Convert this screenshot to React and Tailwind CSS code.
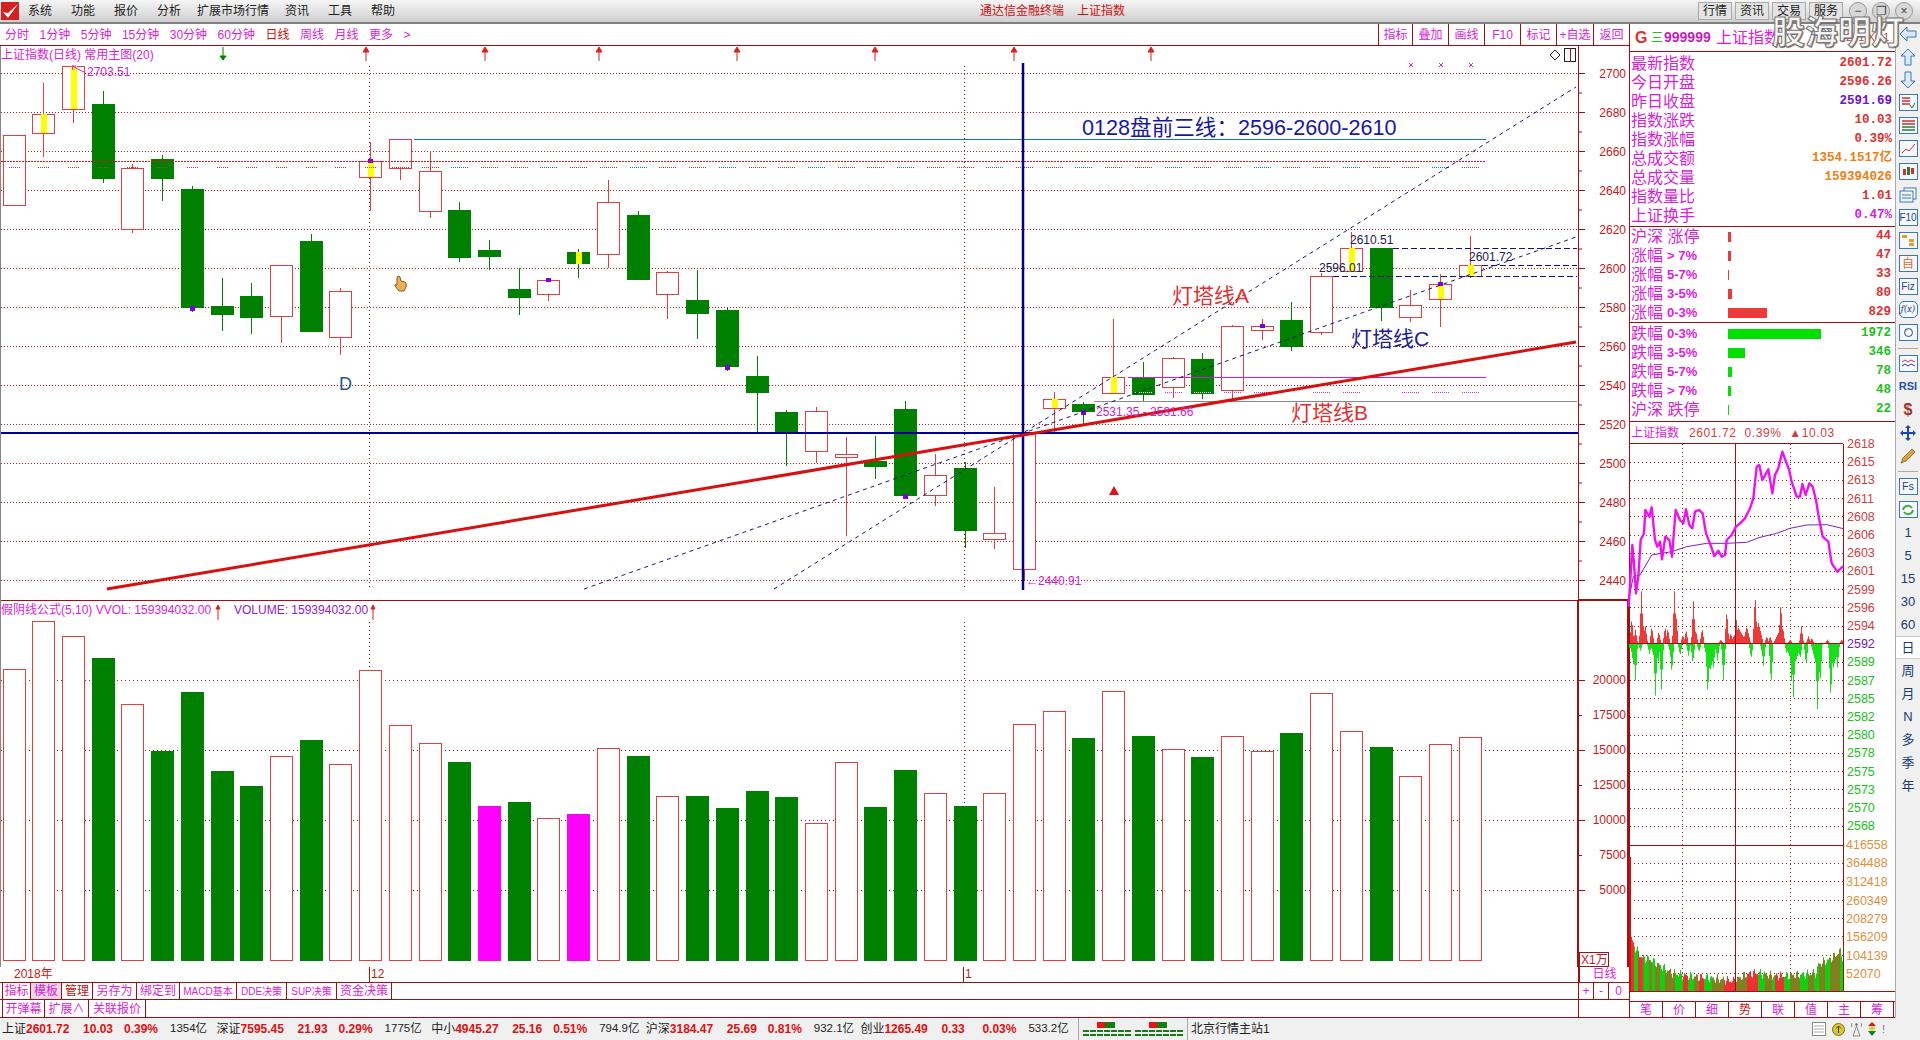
const RED = '#e04040'
const GREEN = '#008000'
const LINE = '#a01010'
const GRID = '#a82020'

// type, high, top, bottom, low, mark (y yellow, t purple top, b purple bottom)
const candles = [
  ['r', 0, 135, 205, 0], ['r', 83, 114, 133, 157, 'y'], ['r', 0, 66, 109, 123, 'y'], ['g', 91, 104, 179, 183],
  ['r', 164, 168, 229, 233], ['g', 155, 159, 179, 201], ['g', 186, 189, 308, 312, 'b'], ['g', 278, 306, 315, 331],
  ['g', 283, 296, 318, 334], ['r', 0, 265, 316, 343], ['g', 234, 241, 332, 0], ['r', 288, 291, 337, 355],
  ['r', 142, 161, 177, 211, 'yt'], ['r', 0, 139, 168, 180], ['r', 151, 171, 211, 218], ['g', 202, 210, 258, 262],
  ['g', 240, 250, 257, 270], ['g', 268, 289, 298, 315], ['r', 0, 280, 294, 301, 't'], ['g', 249, 252, 264, 278, 'y'],
  ['r', 180, 202, 254, 268], ['g', 211, 215, 280, 0], ['r', 271, 272, 294, 319], ['g', 270, 300, 314, 339],
  ['g', 307, 310, 367, 371, 'b'], ['g', 356, 376, 393, 433], ['g', 410, 412, 433, 466], ['r', 407, 411, 451, 463],
  ['r', 437, 454, 457, 536], ['g', 436, 461, 467, 479], ['g', 401, 409, 496, 0, 'b'], ['r', 454, 475, 495, 506],
  ['g', 462, 468, 531, 548], ['r', 487, 533, 539, 549], ['r', 0, 433, 569, 580], ['r', 392, 399, 408, 432, 'y'],
  ['g', 402, 404, 412, 425, 'b'], ['r', 319, 377, 393, 0, 'y'], ['g', 362, 378, 395, 401], ['r', 357, 358, 387, 398],
  ['g', 353, 359, 394, 399], ['r', 325, 326, 390, 399], ['r', 319, 326, 330, 340, 't'], ['g', 302, 320, 347, 351],
  ['r', 273, 276, 332, 335], ['r', 232, 248, 271, 0, 'y'], ['g', 0, 248, 308, 321], ['r', 290, 305, 317, 322],
  ['r', 274, 284, 299, 327, 'yt'], ['r', 236, 265, 276, 278, 'y'],
]

const center = i => Math.round(13.5 + 29.72 * i)

// top of each volume bar, g green, m magenta, r hollow
const volumes = [
  ['r', 669], ['r', 621], ['r', 636], ['g', 658], ['r', 704], ['g', 751], ['g', 692], ['g', 771], ['g', 786], ['r', 756],
  ['g', 740], ['r', 764], ['r', 670], ['r', 725], ['r', 743], ['g', 762], ['m', 806], ['g', 802], ['r', 818], ['m', 814],
  ['r', 748], ['g', 756], ['r', 796], ['g', 796], ['g', 808], ['g', 791], ['g', 797], ['r', 823], ['r', 762], ['g', 807],
  ['g', 770], ['r', 793], ['g', 806], ['r', 793], ['r', 724], ['r', 711], ['g', 738], ['r', 691], ['g', 736], ['r', 749],
  ['g', 757], ['r', 736], ['r', 751], ['g', 733], ['r', 693], ['r', 731], ['g', 747], ['r', 776], ['r', 744], ['r', 737],
]

const priceY = p => Math.round(73.3 + (2700 - p) * 1.95) + 0.5
const priceTicks = Array.from({ length: 14 }, (_, i) => 2700 - i * 20)
const upMarks = [366, 485, 599, 737, 875, 1014, 1151]

function Txt({ x, y, fill, size = 12, anchor, weight, children }) {
  return (
    <text x={x} y={y} fill={fill} fontSize={size} textAnchor={anchor} fontWeight={weight}>
      {children}
    </text>
  )
}

function Candles() {
  return candles.map((c, i) => {
    const [type, hi, top, bot, lo, mark = ''] = c
    const x = center(i)
    const col = type === 'r' ? RED : GREEN
    return (
      <g key={i}>
        {hi > 0 && <line x1={x + 0.5} x2={x + 0.5} y1={hi} y2={top} stroke={col} />}
        {lo > 0 && <line x1={x + 0.5} x2={x + 0.5} y1={bot} y2={lo} stroke={col} />}
        {type === 'r' ? (
          <rect x={x - 10.5} y={top + 0.5} width={22} height={bot - top} fill="#fff" stroke={RED} />
        ) : (
          <rect x={x - 11} y={top} width={23} height={bot - top} fill={GREEN} />
        )}
        {mark.includes('y') && <rect x={x - 2} y={top} width={6} height={bot - top} fill="#ffff00" />}
        {mark.includes('t') && <rect x={x - 2} y={top - 2} width={5} height={4} fill="#8000e0" />}
        {mark.includes('b') && <rect x={x - 2} y={bot - 2} width={5} height={5} fill="#8000e0" />}
      </g>
    )
  })
}

function PricePanel() {
  return (
    <svg className="block w-[1629px] h-[555px]" viewBox="0 46 1629 555">
      {priceTicks.map(p => (
        <line key={p} x1="1" x2="1578" y1={priceY(p)} y2={priceY(p)} stroke={GRID} strokeDasharray="1 2" />
      ))}
      <line x1="369.5" x2="369.5" y1="66" y2="588" stroke={GRID} strokeDasharray="1 3" />
      <line x1="964.5" x2="964.5" y1="66" y2="588" stroke={GRID} strokeDasharray="1 3" />
      <Candles />
      {/* dashed levels */}
      {candles.map((_, i) => (
        <line key={i} x1={center(i) - (i < 13 ? 5 : 8)} x2={center(i) + (i < 13 ? 6 : 9)} y1="167.5" y2="167.5"
          stroke={i > 13 && i % 3 === 0 ? '#208070' : '#d03030'} strokeDasharray="1 1" />
      ))}
      {candles.slice(38).map((_, i) => (
        <line key={i} x1={center(i + 38) - 8} x2={center(i + 38) + 9} y1="392.5" y2="392.5"
          stroke={candles[i + 38][0] === 'g' ? '#fff' : '#d030d0'} strokeDasharray="1 1" />
      ))}
      <line x1="1" x2="1486" y1="161.5" y2="161.5" stroke="#c02020" strokeDasharray="2 1" />
      <line x1="414" x2="1486" y1="139.5" y2="139.5" stroke="#108080" strokeWidth="1.2" />
      <line x1="1094" x2="1577" y1="401.5" y2="401.5" stroke="#888" />
      <line x1="1128" x2="1486" y1="377.5" y2="377.5" stroke="#d020c0" strokeWidth="1.2" />
      <line x1="1393" x2="1577" y1="248.5" y2="248.5" stroke="#101090" strokeDasharray="6 3" />
      <line x1="1482" x2="1577" y1="265.5" y2="265.5" stroke="#101090" strokeDasharray="6 3" />
      <line x1="1333" x2="1577" y1="276.5" y2="276.5" stroke="#101090" strokeDasharray="6 3" />
      {/* trend lines */}
      <line x1="774" y1="589" x2="1576" y2="87" stroke="#000060" strokeWidth="0.9" strokeDasharray="4 4" />
      <line x1="584" y1="589" x2="1576" y2="237" stroke="#000060" strokeWidth="0.9" strokeDasharray="4 4" />
      <line x1="1" x2="1578" y1="433" y2="433" stroke="#000090" strokeWidth="2.2" />
      <line x1="1023" x2="1023" y1="63" y2="590" stroke="#000090" strokeWidth="2.5" />
      <line x1="107" y1="589" x2="1576" y2="342" stroke="#d81010" strokeWidth="3" />
      {/* annotations */}
      <Txt x="1082" y="135" fill="#1818a8" size="21.6">0128盘前三线：2596-2600-2610</Txt>
      <Txt x="1172" y="303" fill="#e03030" size="21">灯塔线A</Txt>
      <Txt x="1291" y="420" fill="#e03030" size="21">灯塔线B</Txt>
      <Txt x="1351" y="346" fill="#202090" size="21">灯塔线C</Txt>
      <Txt x="339" y="390" fill="#1a5a98" size="18">D</Txt>
      <Txt x="87" y="76" fill="#d020d0">2703.51</Txt>
      <path d="M72 66 L84 72 M72 66 l4 0 M72 66 l1 4" stroke="#d020d0" fill="none" />
      <Txt x="1026" y="585" fill="#d020d0">←2440.91</Txt>
      <Txt x="1096" y="416" fill="#d020d0">2531.35 - 2531.66</Txt>
      <Txt x="1350" y="244" fill="#202050">2610.51</Txt>
      <Txt x="1319" y="272" fill="#202050">2596.01</Txt>
      <Txt x="1469" y="261" fill="#202050">2601.72</Txt>
      <polygon points="1114,486 1109,495 1119,495" fill="#e01010" />
      {[1411, 1441, 1471].map(x => (
        <path key={x} d={`M${x - 2} 63 l4 4 m0 -4 l-4 4`} stroke="#e020d0" fill="none" />
      ))}
      {/* hand cursor */}
      <path d="M397 277 q2 -2 3 0 l1 4 l4 1 q2 1 1 5 l-2 4 h-5 l-4 -5 q-1 -2 2 -1 z" fill="#f0b050" stroke="#604010" strokeWidth="0.8" />
      {/* top marks */}
      <path d="M223 47 V60 M220 56 H226 L223 60 Z" stroke={GREEN} fill={GREEN} />
      {upMarks.map(x => (
        <path key={x} d={`M${x} 61 V48 M${x - 3} 52 H${x + 3} L${x} 47 Z`} stroke="#e02020" fill="#e02020" />
      ))}
      <Txt x="1" y="59" fill="#d81ed8">上证指数(日线) 常用主图(20)</Txt>
      <path d="M1555 50 l5 5 l-5 5 l-5 -5 z" fill="none" stroke="#222" />
      <rect x="1564.5" y="48.5" width="11" height="13" fill="none" stroke="#222" />
      <line x1="1570.5" x2="1570.5" y1="48" y2="62" stroke={LINE} />
      {/* axis */}
      <line x1="0.5" x2="0.5" y1="46" y2="601" stroke="#888" />
      <line x1="1578.5" x2="1578.5" y1="46" y2="601" stroke={LINE} />
      {priceTicks.map(p => (
        <g key={p}>
          <line x1="1578" x2="1585" y1={priceY(p)} y2={priceY(p)} stroke={LINE} />
          <line x1="1578" x2="1582" y1={priceY(p) + 19.5} y2={priceY(p) + 19.5} stroke={LINE} />
          <Txt x="1626" y={priceY(p) + 4} fill="#c81818" anchor="end">{p}</Txt>
        </g>
      ))}
      <line x1="1" x2="1628" y1="600.5" y2="600.5" stroke={LINE} />
      <line x1="1578" x2="1628" y1="600" y2="600" stroke={LINE} strokeWidth="2" />
    </svg>
  )
}

function VolumePanel() {
  const base = 961
  return (
    <svg className="block w-[1629px] h-[366px]" viewBox="0 601 1629 366">
      {[680, 750, 820, 890].map(y => (
        <line key={y} x1="1" x2="1578" y1={y + 0.5} y2={y + 0.5} stroke={GRID} strokeDasharray="1 3" />
      ))}
      <line x1="369.5" x2="369.5" y1="622" y2="961" stroke={GRID} strokeDasharray="1 3" />
      <line x1="964.5" x2="964.5" y1="622" y2="961" stroke={GRID} strokeDasharray="1 3" />
      {volumes.map(([t, top], i) => {
        const x = center(i)
        if (t === 'r') return <rect key={i} x={x - 10.5} y={top + 0.5} width={22} height={base - top - 1} fill="#fff" stroke={RED} />
        return <rect key={i} x={x - 11} y={top} width={23} height={base - top} fill={t === 'g' ? GREEN : '#ff00ff'} />
      })}
      <Txt x="1" y="614" fill="#d81ed8">假阴线公式(5,10) VVOL: 159394032.00</Txt>
      <Txt x="234" y="614" fill="#9020d0">VOLUME: 159394032.00</Txt>
      <path d="M218 620 V606 M216 609 H220 L218 605 Z" stroke="#e02020" fill="#e02020" />
      <path d="M373 620 V606 M371 609 H375 L373 605 Z" stroke="#e02020" fill="#e02020" />
      <line x1="0.5" x2="0.5" y1="601" y2="967" stroke="#888" />
      <line x1="1578" x2="1578" y1="601" y2="967" stroke={LINE} strokeWidth="2" />
      {[20000, 17500, 15000, 12500, 10000, 7500, 5000].map(v => {
        const y = 680 + (20000 - v) * 0.014
        return (
          <g key={v}>
            <line x1="1578" x2={v % 5000 ? 1582 : 1585} y1={y + 0.5} y2={y + 0.5} stroke={LINE} />
            <Txt x="1626" y={y + 4} fill="#c81818" anchor="end">{v}</Txt>
          </g>
        )
      })}
      <rect x="1579.5" y="952.5" width="29" height="14" fill="none" stroke={LINE} />
      <Txt x="1581" y="964" fill="#c81818">X1万</Txt>
      <line x1="1628" x2="1628" y1="601" y2="967" stroke={LINE} strokeWidth="2" />
    </svg>
  )
}

// intraday, points read in crop units
const sx = X => 1600 + X / 3
const sy = Y => 430 + Y / 3
const pricePts = [[86,530],[92,430],[97,345],[102,400],[108,490],[115,440],[122,330],[132,310],[136,240],[148,260],[155,232],[165,330],[172,350],[180,335],[186,388],[196,320],[208,330],[216,380],[227,240],[240,270],[250,280],[258,238],[268,285],[277,295],[285,245],[297,240],[308,250],[318,310],[330,340],[343,378],[355,362],[365,380],[375,375],[380,330],[395,315],[408,290],[420,280],[435,265],[450,235],[460,205],[470,110],[478,105],[487,150],[505,118],[517,190],[525,135],[535,115],[547,65],[558,95],[568,122],[575,155],[590,200],[600,200],[607,162],[617,195],[628,160],[638,170],[648,210],[657,265],[668,320],[685,335],[695,400],[712,425],[730,408]]
const avgPts = [[86,510],[100,440],[120,435],[155,375],[185,370],[215,365],[260,350],[320,340],[380,340],[440,337],[480,322],[530,310],[570,295],[620,285],[680,284],[730,296]]
const redPeaks = [[95,75],[106,40],[124,155],[130,50,12],[136,50],[155,50],[176,35],[195,50],[203,45],[223,155],[228,85],[248,25],[258,40],[280,125],[287,40],[306,45],[362,10],[380,100],[392,30],[408,80],[415,45,25],[440,50,12],[465,150],[475,60,15],[500,20],[510,20],[535,30,15],[542,125],[548,50],[570,10],[604,50],[625,20],[635,15],[682,10],[725,10]]
const greenPeaks = [[90,15],[100,60,10],[106,110],[121,20],[148,30],[165,50,15],[166,155],[174,60],[184,135],[210,25],[215,90],[240,35],[265,35],[278,60],[297,25],[330,80,20],[323,160],[340,70],[352,50],[370,110],[453,45],[487,35],[490,65],[513,125],[560,30],[580,70,25],[575,130],[580,160],[600,45],[618,65],[650,70,18],[652,195],[660,120],[692,170],[700,70,18],[712,70]]
const volEnv = [[88,170],[105,130],[125,100],[150,95],[180,75],[215,55],[260,45],[320,40],[400,30],[440,50],[470,55],[520,45],[600,48],[650,55],[655,80],[690,95],[722,120],[730,90]]
const volRuns = [[100,'r'],[112,'g'],[125,'r'],[132,'o'],[145,'g'],[155,'o'],[165,'g'],[180,'o'],[195,'g'],[225,'o'],[248,'g'],[262,'r'],[280,'g'],[296,'o'],[312,'r'],[335,'g'],[370,'o'],[405,'r'],[440,'o'],[472,'r'],[495,'g'],[515,'o'],[525,'g'],[550,'r'],[568,'g'],[600,'o'],[622,'g'],[640,'o'],[655,'g'],[675,'o'],[690,'g'],[720,'o'],[731,'g']]
const volCol = { r: '#f03030', g: '#10d010', o: '#808020' }

const peakAt = (list, X) =>
  list.reduce((m, [p, h, w = 7]) => Math.max(m, h * Math.max(0, 1 - Math.abs(X - p) / w)), 0)

const envAt = X => {
  for (let i = 1; i < volEnv.length; i++) {
    if (X <= volEnv[i][0]) {
      const [a, h1] = volEnv[i - 1]
      const [b, h2] = volEnv[i]
      return h1 + ((X - a) / (b - a)) * (h2 - h1)
    }
  }
  return 60
}

const columns = Array.from({ length: 214 }, (_, i) => 88 + i * 3)
const intradayLabels = ['2618','2615','2613','2611','2608','2606','2603','2601','2599','2596','2594','2592','2589','2587','2585','2582','2580','2578','2575','2573','2570','2568']
const amountLabels = [[845,'416558'],[863,'364488'],[882,'312418'],[901,'260349'],[919,'208279'],[937,'156209'],[956,'104139'],[974,'52070']]

function IntradayPanel() {
  const toPts = list => list.map(([X, Y]) => `${sx(X)},${sy(Y)}`).join(' ')
  return (
    <svg className="block w-[265px] h-[548px] overflow-visible" viewBox="1630 443 265 548">
      {intradayLabels.map((l, i) => (
        <g key={l}>
          {i > 0 && i !== 11 && (
            <line x1="1630" x2="1843" y1={Math.round(443.5 + 18.2 * i) + 0.5} y2={Math.round(443.5 + 18.2 * i) + 0.5} stroke={GRID} strokeDasharray="1 3" />
          )}
          <Txt x="1847" y={448 + 18.2 * i} size="12.5" fill={i < 11 ? '#d04040' : i === 11 ? '#7020c0' : '#20c020'}>{l}</Txt>
        </g>
      ))}
      {[863, 881, 900, 918, 936, 955, 973].map(y => (
        <line key={y} x1="1630" x2="1843" y1={y + 0.5} y2={y + 0.5} stroke={GRID} strokeDasharray="1 3" />
      ))}
      <line x1="1682.5" x2="1682.5" y1="444" y2="991" stroke={GRID} strokeDasharray="1 3" />
      <line x1="1790.5" x2="1790.5" y1="444" y2="991" stroke={GRID} strokeDasharray="1 3" />
      {columns.map(X => {
        const x = Math.round(sx(X)) + 0.5
        const up = peakAt(redPeaks, X) / 3
        const down = peakAt(greenPeaks, X) / 3
        const h = (envAt(X) + 9 * Math.sin(X * 1.7) + 6 * Math.sin(X * 0.63)) / 3
        const run = volRuns.find(r => X <= r[0]) || volRuns[0]
        return (
          <g key={X}>
            {up > 0 && <line x1={x} x2={x} y1={643} y2={643 - up} stroke="#f03838" />}
            {down > 0 && <line x1={x} x2={x} y1={644} y2={644 + down} stroke="#18e018" />}
            <line x1={x} x2={x} y1={991} y2={991 - h} stroke={volCol[run[1]]} />
          </g>
        )
      })}
      <line x1="1630" x2="1630" y1="857" y2="991" stroke="#d01010" strokeWidth="2" />
      <line x1="1630" x2="1843" y1="643.5" y2="643.5" stroke={LINE} />
      <line x1="1630" x2="1843" y1="845.5" y2="845.5" stroke={LINE} />
      <line x1="1630" x2="1843" y1="443.5" y2="443.5" stroke={LINE} />
      <line x1="1735.5" x2="1735.5" y1="444" y2="991" stroke={LINE} />
      <line x1="1843.5" x2="1843.5" y1="444" y2="991" stroke={LINE} />
      <polyline points={toPts(avgPts)} fill="none" stroke="#8020c0" strokeWidth="1" />
      <polyline points={toPts(pricePts)} fill="none" stroke="#f010f0" strokeWidth="2.4" strokeLinejoin="round" />
      {amountLabels.map(([y, l]) => (
        <Txt key={l} x="1846" y={y + 4} size="12.5" fill="#e09040">{l}</Txt>
      ))}
    </svg>
  )
}

const menu = ['系统', '功能', '报价', '分析', '扩展市场行情', '资讯', '工具', '帮助']
const periods = ['分时', '1分钟', '5分钟', '15分钟', '30分钟', '60分钟', '日线', '周线', '月线', '更多', '>']
const tools = [['指标', 'w-[34px]'], ['叠加', 'w-[36px]'], ['画线', 'w-[36px]'], ['F10', 'w-[36px]'], ['标记', 'w-[36px]'], ['+自选', 'w-[37px]'], ['返回', 'w-[36px]']]

function TitleBar() {
  return (
    <div className="relative h-[24px] flex items-center bg-gradient-to-b from-[#f6f6f6] to-[#cfcfcf] border-b-2 border-[#808080]">
      <svg className="w-[18px] h-[18px] ml-[1px]" viewBox="0 0 18 18">
        <rect width="18" height="18" fill="#d82020" />
        <path d="M2 10 L7 16 L17 2 L7 11 Z" fill="#fff" />
      </svg>
      <div className="flex gap-[19px] ml-[9px] w-[952px] text-[12px] text-[#222]">
        {menu.map(m => <span key={m} className={m.length > 2 ? '-mx-[3px]' : ''}>{m}</span>)}
      </div>
      <span className="text-[12px] text-[#d01010] w-[97px]">通达信金融终端</span>
      <span className="text-[12px] text-[#d01010]">上证指数</span>
      <div className="ml-auto flex items-center gap-[3px] mr-[7px]">
        {['行情', '资讯', '交易', '服务'].map(b => (
          <span key={b} className="w-[34px] h-[18px] flex items-center justify-center text-[12px] text-[#222] bg-[#e4e4e4] border border-[#aaa]">{b}</span>
        ))}
        <div className="flex gap-[5px] ml-[3px]">
          {['−', '❐', '×'].map(b => (
            <span key={b} className="w-[18px] h-[18px] rounded-full flex items-center justify-center text-[12px] text-[#444] bg-[#d8d8d8] border border-[#999]">{b}</span>
          ))}
        </div>
      </div>
      <span className="absolute left-[1772px] top-[12px] z-10 text-[33px] leading-[42px] font-bold text-[#f4f4f4] whitespace-nowrap [-webkit-text-stroke:1px_#777] [text-shadow:1px_1px_1px_#666]">股海明灯</span>
    </div>
  )
}

function Toolbar() {
  return (
    <div className="h-[22px] flex items-center border-b border-[#a01010] text-[12px] text-[#d81ed8]">
      <div className="flex gap-[10.5px] pl-[5px] w-[1378px]">
        {periods.map(p => <span key={p} className={p === '日线' ? 'text-[#c81010]' : ''}>{p}</span>)}
      </div>
      {tools.map(([t, w]) => (
        <span key={t} className={`${w} h-full flex items-center justify-center border-l border-[#a01010]`}>{t}</span>
      ))}
    </div>
  )
}

const bottomTabs = [
  ['指标', 'w-[29px]'], ['模板', 'w-[31px] bg-[#ead8ea]'], ['管理', 'w-[31px] text-[#c81010]'], ['另存为', 'w-[44px]'], ['绑定到', 'w-[43px]'],
  ['MACD基本', 'w-[57px] text-[10px]'], ['DDE决策', 'w-[50px] text-[10px]'], ['SUP决策', 'w-[50px] text-[10px]'], ['资金决策', 'w-[55px]'],
]
const bottomTabs2 = [['开弹幕', 'w-[43px]'], ['扩展∧', 'w-[44px]'], ['关联报价', 'w-[57px]']]

function DateRow() {
  return (
    <div className="h-[16px] flex border-b border-[#a01010] text-[12px] leading-[15px]">
      <div className="relative w-[1578px] text-[#c81818]">
        <span className="ml-[14px]">2018年</span>
        <span className="absolute left-[369px] top-0 border-l border-[#a01010] pl-[1px]">12</span>
        <span className="absolute left-[963px] top-0 border-l border-[#a01010] pl-[1px]">1</span>
      </div>
      <div className="w-[51px] border-l-2 border-[#a01010] text-center text-[#d81ed8]">日线</div>
    </div>
  )
}

function TabRow({ tabs, height, right }) {
  return (
    <div className={`${height} flex border-b border-[#a01010] text-[12px] text-[#d81ed8]`}>
      <div className="flex w-[1578px] pl-[2px]">
        {tabs.map(([t, c]) => (
          <span key={t} className={`${c} first:border-l border-r border-[#a01010] flex items-center justify-center whitespace-nowrap`}>{t}</span>
        ))}
      </div>
      <div className="flex flex-1 border-l border-[#a01010]">{right}</div>
    </div>
  )
}

const quotes = [
  ['最新指数', '2601.72', 'text-[#e03030]'],
  ['今日开盘', '2596.26', 'text-[#e03030]'],
  ['昨日收盘', '2591.69', 'text-[#7010d0]'],
  ['指数涨跌', '10.03', 'text-[#e03030]'],
  ['指数涨幅', '0.39%', 'text-[#e03030]'],
  ['总成交额', '1354.1517亿', 'text-[#f08010]'],
  ['总成交量', '159394026', 'text-[#f08010]'],
  ['指数量比', '1.01', 'text-[#e03030]'],
  ['上证换手', '0.47%', 'text-[#d020e0]'],
]

const ups = [
  ['沪深 涨停', '', 3, '44'], ['涨幅', '> 7%', 3, '47'], ['涨幅', '5-7%', 1, '33'], ['涨幅', '3-5%', 4, '80'], ['涨幅', '0-3%', 39, '829'],
]
const downs = [
  ['跌幅', '0-3%', 93, '1972'], ['跌幅', '3-5%', 17, '346'], ['跌幅', '5-7%', 4, '78'], ['跌幅', '> 7%', 3, '48'], ['沪深 跌停', '', 1, '22'],
]

function StatRow({ row, up }) {
  const [name, range, width, value] = row
  return (
    <div className="h-[19px] flex items-center pl-[1px] pr-[4px]">
      <div className="w-[97px] flex items-center gap-[4px] text-[16px] leading-[19px] text-[#d81ed8]">
        <span>{name}</span>
        {range && <span className="text-[13px] font-bold text-[#e020e0]">{range}</span>}
      </div>
      <div className={`h-[10px] ${up ? 'bg-[#f03838]' : 'bg-[#00e000]'}`} style={{ width }} />
      <span className={`ml-auto font-['Liberation_Mono','Noto_Sans_CJK_SC',monospace] font-bold text-[12.5px] ${up ? 'text-[#e03030]' : 'text-[#20c020]'}`}>{value}</span>
    </div>
  )
}

function RightPanel() {
  return (
    <div className="w-[266px] flex flex-col border-l border-[#a01010]">
      <div className="h-[28px] flex items-center border-b border-[#a01010] pl-[5px] whitespace-nowrap">
        <span className="text-[16px] font-bold text-[#e03030] w-[16px]">G</span>
        <span className="text-[12px] text-[#20c020] w-[13px]">三</span>
        <span className="text-[14px] font-bold text-[#c81eb8] w-[52px]">999999</span>
        <span className="text-[16px] text-[#d81ed8]">上证指数</span>
        <span className="ml-[66px] text-[11px] text-[#d04040]">291 XG1</span>
      </div>
      <div className="h-[175px] pt-[2px] border-b border-[#a01010]">
        {quotes.map(([k, v, c]) => (
          <div key={k} className="h-[19px] flex items-center justify-between pl-[1px] pr-[3px]">
            <span className="text-[16px] leading-[19px] text-[#d81ed8]">{k}</span>
            <span className={`font-['Liberation_Mono','Noto_Sans_CJK_SC',monospace] font-bold text-[12.5px] ${c}`}>{v}</span>
          </div>
        ))}
      </div>
      <div className="h-[96px] border-b border-[#a01010]">
        {ups.map(r => <StatRow key={r[0] + r[1]} row={r} up />)}
      </div>
      <div className="h-[99px] pt-[1px] border-b border-[#a01010]">
        {downs.map(r => <StatRow key={r[0] + r[1]} row={r} />)}
      </div>
      <div className="h-[21px] flex items-center pl-[1px] text-[12px] whitespace-nowrap">
        <span className="text-[#d81ed8] w-[58px]">上证指数</span>
        <span className="text-[#d04040] tracking-[0.6px]">2601.72&nbsp;&nbsp;0.39%&nbsp;&nbsp;▲10.03</span>
      </div>
      <IntradayPanel />
      <div className="h-[10px] border-t border-[#a01010]" />
      <div className="h-[17px] flex border-y border-[#a01010] text-[12px] text-[#d81ed8]">
        {['笔', '价', '细', '势', '联', '值', '主', '筹'].map(t => (
          <span key={t} className={`w-[33px] flex items-center justify-center border-r border-[#a01010] ${t === '势' ? 'text-[#c81010]' : ''}`}>{t}</span>
        ))}
      </div>
    </div>
  )
}

function Framed({ children, className = '' }) {
  return (
    <span className={`w-[19px] h-[17px] flex items-center justify-center border border-[#3a78b8] bg-[#f8f8ff] text-[10px] text-[#204890] ${className}`}>
      {children}
    </span>
  )
}

const arrowProps = { stroke: '#3a7ac0', fill: '#dce9f8', strokeWidth: 1 }

const sideIcons = [
  <svg key="l" width="20" height="20" viewBox="0 0 20 20"><path d="M9 3 L2 10 L9 17 V13 H18 V7 H9 Z" {...arrowProps} /></svg>,
  <svg key="u" width="20" height="20" viewBox="0 0 20 20"><path d="M10 2 L3 9 H7 V18 H13 V9 H17 Z" {...arrowProps} /></svg>,
  <svg key="d" width="20" height="20" viewBox="0 0 20 20"><path d="M10 18 L3 11 H7 V2 H13 V11 H17 Z" {...arrowProps} /></svg>,
  <Framed key="t"><svg width="15" height="13" viewBox="0 0 15 13"><path d="M1 2 H9 M1 5 H9 M1 8 H9" stroke="#d03030" strokeWidth="1.5" /><path d="M9 9 l2 3 l3 -5" stroke="#208030" fill="none" /></svg></Framed>,
  <Framed key="g"><svg width="15" height="13" viewBox="0 0 15 13"><path d="M1 2 H14 M1 5 H14" stroke="#d03030" strokeWidth="1.5" /><path d="M1 8 H14 M1 11 H14" stroke="#208030" strokeWidth="1.5" /></svg></Framed>,
  <Framed key="c"><svg width="15" height="13" viewBox="0 0 15 13"><path d="M1 11 L5 7 L8 9 L14 2" stroke="#d03030" fill="none" /></svg></Framed>,
  <Framed key="k"><svg width="15" height="13" viewBox="0 0 15 13"><rect x="2" y="4" width="3" height="6" fill="#d03030" /><rect x="6" y="2" width="3" height="8" fill="#208030" /><rect x="10" y="3" width="3" height="6" fill="#d03030" /></svg></Framed>,
  <svg key="w" width="20" height="20" viewBox="0 0 20 20"><rect x="6" y="3" width="12" height="11" fill="#fff" stroke="#3a78b8" /><rect x="2" y="6" width="13" height="11" fill="#eef4fc" stroke="#3a78b8" /><path d="M4 10 H13 M4 13 H13" stroke="#3a78b8" /></svg>,
  <Framed key="f10">F10</Framed>,
  <Framed key="tree"><svg width="15" height="13" viewBox="0 0 15 13"><rect x="1" y="1" width="5" height="3" fill="#e0a030" /><rect x="8" y="5" width="5" height="3" fill="#e0a030" /><rect x="8" y="9" width="5" height="3" fill="#e0a030" /></svg></Framed>,
  <Framed key="zi" className="text-[#e07030] text-[12px]">自</Framed>,
  <Framed key="f12">Fiz</Framed>,
  <Framed key="fx" className="rounded-[5px] font-serif italic">f(x)</Framed>,
  <Framed key="o"><span className="w-[9px] h-[9px] rounded-full border border-[#204890]" /></Framed>,
  'sep',
  <Framed key="wave"><svg width="15" height="13" viewBox="0 0 15 13"><path d="M1 5 L4 3 L7 5 L10 3 L14 5" stroke="#d03030" fill="none" /><path d="M1 9 L4 7 L7 9 L10 7 L14 9" stroke="#3030b0" fill="none" /></svg></Framed>,
  <span key="rsi" className="text-[11px] font-bold text-[#2850a8]">RSI</span>,
  <span key="s" className="text-[16px] font-bold text-[#a03030]">$</span>,
  <svg key="m" width="18" height="18" viewBox="0 0 18 18"><path d="M9 1 L12 4 H10 V8 H14 V6 L17 9 L14 12 V10 H10 V14 H12 L9 17 L6 14 H8 V10 H4 V12 L1 9 L4 6 V8 H8 V4 H6 Z" fill="#1848b0" /></svg>,
  <svg key="p" width="18" height="18" viewBox="0 0 18 18"><path d="M2 16 L4 11 L13 2 L16 5 L7 14 Z" fill="#e0a040" stroke="#806020" strokeWidth="0.8" /></svg>,
  'sep',
  <Framed key="fs" className="text-[11px]">Fs</Framed>,
  <Framed key="r"><svg width="14" height="12" viewBox="0 0 14 12"><path d="M2 6 a5 5 0 0 1 9 -2 M12 6 a5 5 0 0 1 -9 2" stroke="#40b040" strokeWidth="2" fill="none" /></svg></Framed>,
]
const sideTexts = ['1', '5', '15', '30', '60', '日', '周', '月', 'N', '多', '季', '年']

function Sidebar() {
  return (
    <div className="w-[25px] flex flex-col items-center bg-[#f0f0f0] border-l border-[#aaa]">
      <div className="-mt-[2px] flex flex-col items-center w-full">
        {sideIcons.map((icon, i) =>
          icon === 'sep' ? (
            <div key={i} className="h-[8px] w-[20px] flex items-center"><div className="h-[1px] w-full bg-[#b0a8a0]" /></div>
          ) : (
            <div key={i} className="h-[23px] flex items-center justify-center shrink-0">{icon}</div>
          )
        )}
        {sideTexts.map(t => (
          <div key={t} className={`h-[23px] w-full flex items-center justify-center shrink-0 text-[13px] text-[#1a3a78] ${t === '日' ? 'bg-white border-y border-[#ccc]' : ''}`}>{t}</div>
        ))}
      </div>
    </div>
  )
}

const indices = [
  ['上证', '2601.72', '10.03', '0.39%', '1354亿'],
  ['深证', '7595.45', '21.93', '0.29%', '1775亿'],
  ['中小', '4945.27', '25.16', '0.51%', '794.9亿'],
  ['沪深', '3184.47', '25.69', '0.81%', '932.1亿'],
  ['创业', '1265.49', '0.33', '0.03%', '533.2亿'],
]

function Signal() {
  return (
    <svg width="50" height="16" viewBox="0 0 50 16">
      <rect x="15" y="1" width="8" height="6" fill="#f01010" />
      <rect x="23" y="1" width="10" height="6" fill="#108010" />
      <path d="M1 10 H49 M1 14 H49" stroke="#108010" strokeWidth="2" strokeDasharray="6 1" />
    </svg>
  )
}

function StatusBar() {
  return (
    <div className="h-[22px] flex items-center bg-[#f0f0f0] text-[12px] pl-[2px] whitespace-nowrap">
      {indices.map(([n, p, c, r, a]) => (
        <div key={n} className="w-[214.6px] flex items-center">
          <span className="w-[24px] text-[#222]">{n}</span>
          <span className="w-[56px] font-bold text-[#e01010]">{p}</span>
          <span className="w-[42px] font-bold text-[#e01010] pl-[1px]">{c}</span>
          <span className="w-[46px] font-bold text-[#e01010]">{r}</span>
          <span className="text-[#222] text-[11.5px]">{a}</span>
        </div>
      ))}
      <div className="h-full flex items-center gap-[2px] ml-[3px] border-x border-[#aaa] px-[3px]">
        <Signal />
        <Signal />
      </div>
      <span className="ml-[3px] text-[#222]">北京行情主站1</span>
      <div className="ml-auto mr-[35px] flex items-center gap-[6px]">
        <svg width="14" height="14" viewBox="0 0 14 14"><rect x="0.5" y="0.5" width="13" height="13" fill="#fff" stroke="#888" /><path d="M2 4 H12 M2 7 H12 M2 10 H12" stroke="#aaa" /></svg>
        <svg width="13" height="13" viewBox="0 0 13 13"><circle cx="6.5" cy="6.5" r="6" fill="#d8c830" stroke="#807010" /><path d="M6.5 3 V10 M4 5.5 L6.5 3 L9 5.5" stroke="#504008" fill="none" /></svg>
        <svg width="11" height="16" viewBox="0 0 11 16"><path d="M5.5 5 L2 15 H9 Z M1 2 q-1 2 0 4 M10 2 q1 2 0 4" stroke="#888" fill="none" /><circle cx="5.5" cy="3.5" r="1.2" fill="#666" /></svg>
        <svg width="8" height="14" viewBox="0 0 8 14"><path d="M4 0 L8 4 H0 Z" fill="#e01010" /><rect x="1" y="5" width="6" height="3" fill="#e0d020" /><path d="M4 14 L8 9 H0 Z" fill="#108010" /></svg>
        <span className="text-[11px] text-[#777]">!</span>
      </div>
    </div>
  )
}

export default function App() {
  return (
    <div className="w-[1920px] h-[1040px] overflow-hidden flex flex-col bg-white font-['Liberation_Sans','Noto_Sans_CJK_SC',sans-serif]">
      <TitleBar />
      <div className="flex h-[994px]">
        <div className="w-[1629px] flex flex-col shrink-0">
          <Toolbar />
          <PricePanel />
          <VolumePanel />
          <DateRow />
          <TabRow
            tabs={bottomTabs}
            height="h-[17px]"
            right={
              <>
                <span className="w-[15px] flex items-center justify-center border-r border-[#a01010]">+</span>
                <span className="w-[15px] flex items-center justify-center border-r border-[#a01010]">-</span>
                <span className="w-[19px] flex items-center justify-center">0</span>
              </>
            }
          />
          <TabRow tabs={bottomTabs2} height="h-[18px]" />
        </div>
        <RightPanel />
        <Sidebar />
      </div>
      <StatusBar />
    </div>
  )
}
